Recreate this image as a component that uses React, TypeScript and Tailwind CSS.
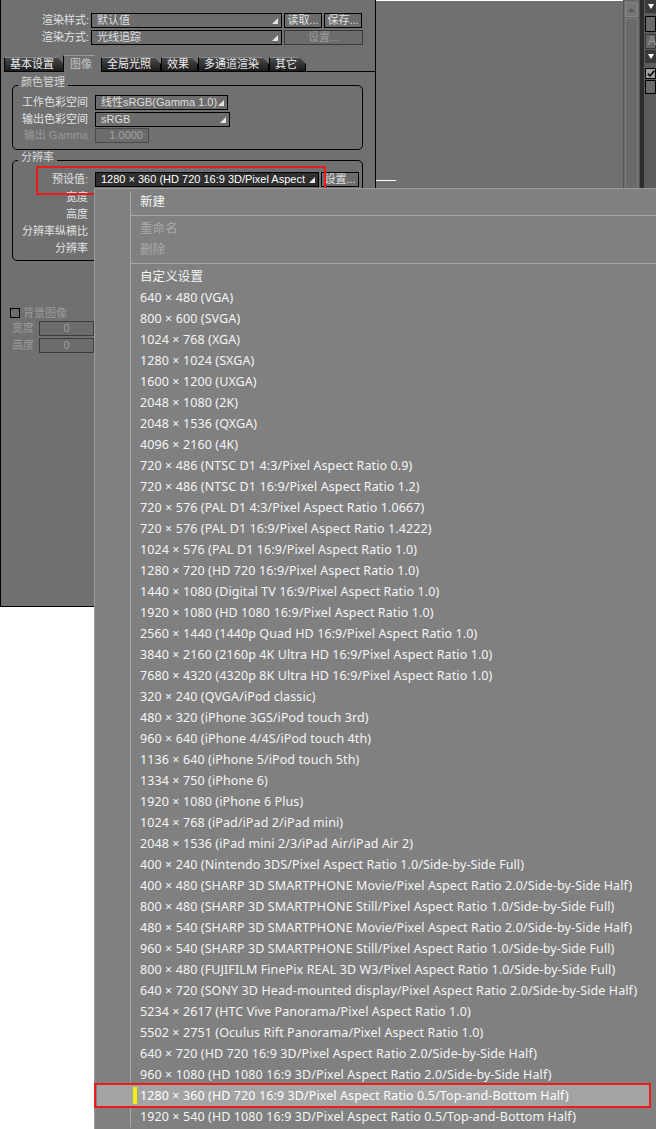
import type { ReactNode } from 'react'

const presets = [
  '640 × 480 (VGA)',
  '800 × 600 (SVGA)',
  '1024 × 768 (XGA)',
  '1280 × 1024 (SXGA)',
  '1600 × 1200 (UXGA)',
  '2048 × 1080 (2K)',
  '2048 × 1536 (QXGA)',
  '4096 × 2160 (4K)',
  '720 × 486 (NTSC D1 4:3/Pixel Aspect Ratio 0.9)',
  '720 × 486 (NTSC D1 16:9/Pixel Aspect Ratio 1.2)',
  '720 × 576 (PAL D1 4:3/Pixel Aspect Ratio 1.0667)',
  '720 × 576 (PAL D1 16:9/Pixel Aspect Ratio 1.4222)',
  '1024 × 576 (PAL D1 16:9/Pixel Aspect Ratio 1.0)',
  '1280 × 720 (HD 720 16:9/Pixel Aspect Ratio 1.0)',
  '1440 × 1080 (Digital TV 16:9/Pixel Aspect Ratio 1.0)',
  '1920 × 1080 (HD 1080 16:9/Pixel Aspect Ratio 1.0)',
  '2560 × 1440 (1440p Quad HD 16:9/Pixel Aspect Ratio 1.0)',
  '3840 × 2160 (2160p 4K Ultra HD 16:9/Pixel Aspect Ratio 1.0)',
  '7680 × 4320 (4320p 8K Ultra HD 16:9/Pixel Aspect Ratio 1.0)',
  '320 × 240 (QVGA/iPod classic)',
  '480 × 320 (iPhone 3GS/iPod touch 3rd)',
  '960 × 640 (iPhone 4/4S/iPod touch 4th)',
  '1136 × 640 (iPhone 5/iPod touch 5th)',
  '1334 × 750 (iPhone 6)',
  '1920 × 1080 (iPhone 6 Plus)',
  '1024 × 768 (iPad/iPad 2/iPad mini)',
  '2048 × 1536 (iPad mini 2/3/iPad Air/iPad Air 2)',
  '400 × 240 (Nintendo 3DS/Pixel Aspect Ratio 1.0/Side-by-Side Full)',
  '400 × 480 (SHARP 3D SMARTPHONE Movie/Pixel Aspect Ratio 2.0/Side-by-Side Half)',
  '800 × 480 (SHARP 3D SMARTPHONE Still/Pixel Aspect Ratio 1.0/Side-by-Side Full)',
  '480 × 540 (SHARP 3D SMARTPHONE Movie/Pixel Aspect Ratio 2.0/Side-by-Side Half)',
  '960 × 540 (SHARP 3D SMARTPHONE Still/Pixel Aspect Ratio 1.0/Side-by-Side Full)',
  '800 × 480 (FUJIFILM FinePix REAL 3D W3/Pixel Aspect Ratio 1.0/Side-by-Side Full)',
  '640 × 720 (SONY 3D Head-mounted display/Pixel Aspect Ratio 2.0/Side-by-Side Half)',
  '5234 × 2617 (HTC Vive Panorama/Pixel Aspect Ratio 1.0)',
  '5502 × 2751 (Oculus Rift Panorama/Pixel Aspect Ratio 1.0)',
  '640 × 720 (HD 720 16:9 3D/Pixel Aspect Ratio 2.0/Side-by-Side Half)',
  '960 × 1080 (HD 1080 16:9 3D/Pixel Aspect Ratio 2.0/Side-by-Side Half)',
  '1280 × 360 (HD 720 16:9 3D/Pixel Aspect Ratio 0.5/Top-and-Bottom Half)',
  '1920 × 540 (HD 1080 16:9 3D/Pixel Aspect Ratio 0.5/Top-and-Bottom Half)',
]

const SELECTED = '1280 × 360 (HD 720 16:9 3D/Pixel Aspect Ratio 0.5/Top-and-Bottom Half)'

const Arrow = () => (
  <svg width="6" height="6" viewBox="0 0 6 6" className="shrink-0">
    <polygon points="6,0 6,6 0,6" fill="#e6e6e6" />
  </svg>
)

const Label = ({ className, children, dim }: { className: string; children: ReactNode; dim?: boolean }) => (
  <div className={`shrink-0 text-right ${dim ? 'text-[#9a9a9a]' : 'text-[#e2e2e2]'} ${className}`}>{children}</div>
)

const Combo = ({ className, text, dark }: { className: string; text: string; dark?: boolean }) => (
  <div
    className={`flex h-[15px] items-center border border-black pl-[5px] pr-[3px] ${
      dark ? 'bg-[#2e2e2e] text-white' : 'bg-[#6c6c6c] text-[#dedede]'
    } ${className}`}
  >
    <span className="flex-1 overflow-hidden whitespace-nowrap">{text}</span>
    <Arrow />
  </div>
)

const Btn = ({ className, children, disabled }: { className: string; children: ReactNode; disabled?: boolean }) => (
  <div
    className={`flex h-[15px] items-center justify-center border bg-[#6c6c6c] ${
      disabled ? 'border-[#3a3a3a] text-[#9c9c9c]' : 'border-black text-[#e0e0e0]'
    } ${className}`}
  >
    {children}
  </div>
)

const Tab = ({ className, children, active }: { className: string; children: ReactNode; active?: boolean }) =>
  active ? (
    <div
      className={`flex h-[17px] items-center border-l border-t border-l-black border-t-[#9a9a9a] bg-[#707070] pl-[6px] text-[#c4c4c4] [clip-path:polygon(0_0,calc(100%-7px)_0,100%_7px,100%_100%,0_100%)] ${className}`}
    >
      {children}
    </div>
  ) : (
    <div
      className={`flex h-[15px] items-center border border-black border-t-[#8a8a8a] bg-gradient-to-b from-[#4a4a4a] to-[#1c1c1c] pl-[5px] text-[#ececec] [clip-path:polygon(0_0,calc(100%-7px)_0,100%_7px,100%_100%,0_100%)] ${className}`}
    >
      {children}
    </div>
  )

const Input = ({ className, value }: { className: string; value: string }) => (
  <div className={`flex h-[15px] items-center justify-center border border-[#3c3c3c] bg-[#6c6c6c] text-[#9c9c9c] ${className}`}>
    {value}
  </div>
)

const LeftPanel = () => (
  <div className="flex h-[607px] w-[376px] shrink-0 flex-col border-x border-b border-black bg-[#707070]">
    <div className="mt-[13px] flex h-[15px] items-center">
      <Label className="w-[88px]">渲染样式:</Label>
      <Combo className="ml-[2px] w-[191px]" text="默认值" />
      <Btn className="ml-[2px] w-[38px]">读取...</Btn>
      <Btn className="ml-[2px] w-[38px]">保存...</Btn>
    </div>
    <div className="mt-[2px] flex h-[15px] items-center">
      <Label className="w-[88px]">渲染方式:</Label>
      <Combo className="ml-[2px] w-[191px]" text="光线追踪" />
      <Btn disabled className="ml-[2px] w-[79px]">设置...</Btn>
    </div>

    <div className="mt-[10px] flex h-[17px] items-end pl-[3px]">
      <Tab className="w-[60px]">基本设置</Tab>
      <Tab active className="-ml-px w-[38px]">图像</Tab>
      <Tab className="w-[60px]">全局光照</Tab>
      <Tab className="w-[37px]">效果</Tab>
      <Tab className="w-[71px]">多通道渲染</Tab>
      <Tab className="w-[37px]">其它</Tab>
      <div className="h-full flex-1 border-b border-black" />
    </div>

    <fieldset className="ml-[11px] mt-[4px] w-[351px] rounded-[5px] border border-black pb-[6px]">
      <legend className="ml-[5px] px-[3px] pb-[7px] leading-[12px] text-[#d8d8d8]">颜色管理</legend>
      <div className="flex h-[15px] items-center">
        <Label className="w-[75px]">工作色彩空间</Label>
        <Combo className="ml-[7px] w-[133px]" text="线性sRGB(Gamma 1.0)" />
      </div>
      <div className="mt-[2px] flex h-[15px] items-center">
        <Label className="w-[75px]">输出色彩空间</Label>
        <Combo className="ml-[7px] w-[135px]" text="sRGB" />
      </div>
      <div className="mt-[1px] flex h-[15px] items-center">
        <Label dim className="w-[75px]">输出 Gamma</Label>
        <div className="ml-[7px] flex h-[15px] w-[54px] items-center justify-end border border-[#4a4a4a] bg-[#6c6c6c] pr-[5px] text-[#a4a4a4]">
          1.0000
        </div>
      </div>
    </fieldset>

    <fieldset className="ml-[11px] mt-[1px] w-[351px] rounded-[5px] border border-black pb-[3px]">
      <legend className="ml-[5px] px-[3px] pb-[7px] leading-[12px] text-[#d8d8d8]">分辨率</legend>
      <div className="relative mt-[2px] flex h-[15px] items-center">
        <Label className="w-[75px]">预设值:</Label>
        <Combo dark className="ml-[7px] w-[224px]" text="1280 × 360 (HD 720 16:9 3D/Pixel Aspect" />
        <Btn className="ml-[2px] w-[38px]">设置...</Btn>
        <div className="absolute left-[23px] top-[-6px] h-[29px] w-[290px] border-2 border-[#ec1a1a]" />
      </div>
      <div className="mt-[2px] flex h-[17px] items-center">
        <Label className="w-[75px]">宽度</Label>
      </div>
      <div className="flex h-[17px] items-center">
        <Label className="w-[75px]">高度</Label>
      </div>
      <div className="flex h-[17px] items-center">
        <Label className="w-[75px]">分辨率纵横比</Label>
      </div>
      <div className="flex h-[17px] items-center">
        <Label className="w-[75px]">分辨率</Label>
      </div>
    </fieldset>

    <div className="ml-[9px] mt-[47px] flex h-[10px] items-center">
      <div className="h-[10px] w-[10px] border border-black bg-[#6c6c6c]" />
      <span className="ml-[3px] text-[#9a9a9a]">背景图像</span>
    </div>
    <div className="mt-[3px] flex h-[15px] items-center">
      <Label dim className="ml-[11px] w-[22px] text-left">宽度</Label>
      <Input className="ml-[5px] w-[55px]" value="0" />
    </div>
    <div className="mt-[2px] flex h-[15px] items-center">
      <Label dim className="ml-[11px] w-[22px] text-left">高度</Label>
      <Input className="ml-[5px] w-[55px]" value="0" />
    </div>
  </div>
)

const Scrollbar = () => (
  <div className="flex h-[188px] w-[17px] shrink-0 flex-col border-x border-[#555555] bg-[#6a6a6a]">
    <div className="mx-px mt-[2px] flex h-[15px] items-center justify-center border border-[#858585] bg-[#767676]">
      <svg width="7" height="4" viewBox="0 0 7 4">
        <polygon points="3.5,0 7,4 0,4" fill="#555" />
      </svg>
    </div>
    <div className="mx-px mt-px flex-1 border-x border-t border-[#7a7a7a]" />
  </div>
)

const DownBar = () => (
  <div className="flex h-[13px] items-center justify-center bg-[#3a3a3a]">
    <svg width="6" height="5" viewBox="0 0 6 5">
      <polygon points="0,0 6,0 3,5" fill="#fff" />
    </svg>
  </div>
)

const RightStrip = () => (
  <div className="flex h-[188px] w-[12px] shrink-0 flex-col bg-[#5c5c5c] pl-px">
    <DownBar />
    <div className="mt-[3px] h-[16px] border border-black bg-[#696969]" />
    <div className="mt-[2px] flex h-[15px] items-center border border-[#3a3a3a] bg-[#676767] pl-[2px] text-[12px] text-[#9c9c9c]">
      A
    </div>
    <div className="mt-px">
      <DownBar />
    </div>
    <div className="mt-[5px] flex h-[11px] w-[11px] items-center justify-center border border-black bg-[#a0a0a0]">
      <svg width="8" height="7" viewBox="0 0 8 7">
        <path d="M0.8 3.6 L3 5.8 L7.4 0.8" stroke="#111" strokeWidth="1.8" fill="none" />
      </svg>
    </div>
    <div className="mt-px h-[14px] border border-black bg-[#696969]" />
  </div>
)

const MenuRow = ({ children, disabled }: { children: ReactNode; disabled?: boolean }) => (
  <div className="flex h-[21px]">
    <div className="w-[36px] shrink-0 border-r border-[#a9a9a9]" />
    <div className={`flex items-center whitespace-nowrap pl-[9px] ${disabled ? 'text-[#a9a9a9]' : 'text-[#f5f5f5]'}`}>
      {children}
    </div>
  </div>
)

const MenuSep = () => (
  <div className="flex h-[6px]">
    <div className="w-[36px] shrink-0 border-r border-[#a9a9a9]" />
    <div className="flex flex-1 items-center">
      <div className="h-px w-full bg-[#a6a6a6]" />
    </div>
  </div>
)

const SelectedRow = ({ children }: { children: ReactNode }) => (
  <div className="relative flex h-[21px]">
    <div className="ml-[2px] mr-[7px] flex flex-1 items-center bg-[#a3a3a3]">
      <div className="w-[36px] shrink-0" />
      <div className="h-[17px] w-[4px] shrink-0 bg-[#f0f000]" />
      <div className="whitespace-nowrap pl-[3px] text-white">{children}</div>
    </div>
    <div className="absolute -left-px right-[5px] top-[-2px] bottom-[-2px] border-2 border-[#ec1a1a]" />
  </div>
)

const PresetMenu = () => (
  <div className="absolute left-[94px] top-[188px] h-[941px] w-[562px] border-l border-t border-[#9c9c9c] bg-[#808080] pt-[2px] font-['Noto_Sans','Noto_Sans_CJK_SC',sans-serif] text-[12.5px] leading-[14px] tracking-[0.1px]">
    <MenuRow>新建</MenuRow>
    <MenuSep />
    <MenuRow disabled>重命名</MenuRow>
    <MenuRow disabled>删除</MenuRow>
    <MenuSep />
    <MenuRow>自定义设置</MenuRow>
    {presets.map((p, i) =>
      p === SELECTED ? <SelectedRow key={i}>{p}</SelectedRow> : <MenuRow key={i}>{p}</MenuRow>,
    )}
  </div>
)

export default function App() {
  return (
    <div className="relative h-[1129px] w-[656px] overflow-hidden bg-white font-['Liberation_Sans','Noto_Sans_CJK_SC',sans-serif] text-[11px] leading-[13px]">
      <div className="flex items-start">
        <LeftPanel />
        <div className="flex h-[188px] w-[247px] shrink-0 flex-col bg-[#707070]">
          <div className="h-px bg-white" />
          <div className="mt-[179px] h-px w-[20px] bg-white" />
        </div>
        <Scrollbar />
        <div className="h-[188px] w-[4px] shrink-0 bg-[#2c2c2c]" />
        <RightStrip />
      </div>
      <PresetMenu />
    </div>
  )
}
